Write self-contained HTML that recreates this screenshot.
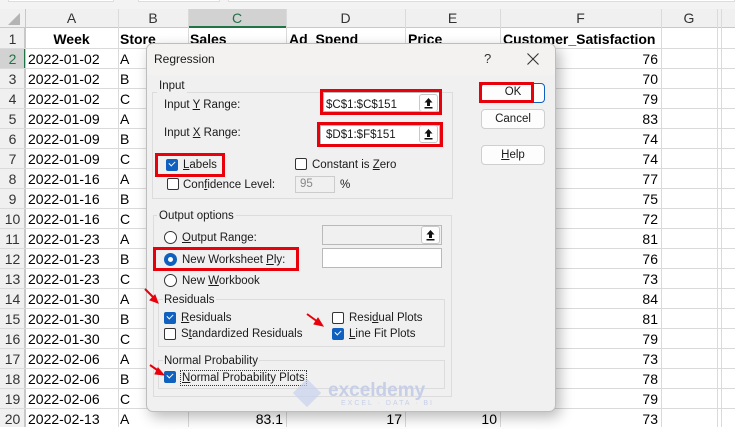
<!DOCTYPE html>
<html><head><meta charset="utf-8"><style>
*{margin:0;padding:0;box-sizing:border-box}
body{width:735px;height:427px;overflow:hidden;background:#fff;position:relative;font-family:"Liberation Sans",sans-serif}
.a{position:absolute}
.cell{position:absolute;font-size:14px;color:#000;line-height:20px;white-space:nowrap}
.hl{position:absolute;left:0;width:735px;height:1px;background:#dadada}
.vl{position:absolute;top:9px;width:1px;height:418px;background:#dadada}
.rh{position:absolute;left:0;width:25px;text-align:center;font-size:14px;color:#333;line-height:20px}
.ch{position:absolute;top:9px;height:19px;text-align:center;font-size:14px;color:#333;line-height:19px}
.d{font-size:11.5px;color:#1a1a1a;position:absolute;white-space:nowrap;line-height:14px}
.grp{position:absolute;border:1px solid #dcdcdc}
.cb{position:absolute;width:12px;height:12px;border:1px solid #333;border-radius:2px;background:#fff}
.cbk{position:absolute;width:12px;height:12px;border-radius:2px;background:#1060c0}
.cbk:after{content:"";position:absolute;left:3px;top:2px;width:5px;height:3px;border-left:1.3px solid #fff;border-bottom:1.3px solid #fff;transform:rotate(-45deg)}
.rd{position:absolute;width:13px;height:13px;border:1px solid #333;border-radius:50%;background:#fff}
.red{position:absolute;border:3px solid #e8000b}
.tb{position:absolute;background:#fff;border:1px solid #b9b9b9}
.btn{position:absolute;background:#fdfdfd;border:1px solid #cfcfcf;border-radius:4px;font-size:11.5px;text-align:center;color:#1a1a1a}
.up{position:absolute;width:19px;height:18px;background:#fdfdfd;border:1px solid #c8c8c8;border-radius:3px}
u{text-decoration:underline}
</style></head><body>
<div class="a" style="left:0;top:0;width:735px;height:9px;background:#f3f3f3"></div>
<div class="a" style="left:8px;top:0;width:106px;height:2px;border:1px solid #ddd;border-top:none;background:#fff"></div>
<div class="a" style="left:138px;top:0;width:82px;height:2px;border:1px solid #ddd;border-top:none;background:#fff"></div>
<div class="a" style="left:228px;top:0;width:507px;height:2px;border:1px solid #ddd;border-top:none;background:#fff"></div>
<div class="a" style="left:0;top:9px;width:735px;height:19px;background:#f0f0f0;border-bottom:1px solid #c8c8c8"></div>
<div class="a" style="left:0;top:28px;width:25px;height:399px;background:#f0f0f0;border-right:1px solid #c8c8c8"></div>
<div class="a" style="left:188px;top:9px;width:98px;height:19px;background:#d2d2d2;border-bottom:2px solid #217346"></div>
<div class="a" style="left:0;top:48px;width:25px;height:20px;background:#d2d2d2"></div>
<div class="a" style="left:24px;top:48px;width:2px;height:20px;background:#217346"></div>
<div class="a" style="left:8px;top:13px;width:0;height:0;border-left:12px solid transparent;border-bottom:12px solid #b4b4b4"></div>
<div class="ch" style="left:25px;width:93px">A</div>
<div class="ch" style="left:118px;width:70px">B</div>
<div class="ch" style="left:188px;width:98px;color:#217346">C</div>
<div class="ch" style="left:286px;width:119px">D</div>
<div class="ch" style="left:405px;width:95px">E</div>
<div class="ch" style="left:500px;width:161px">F</div>
<div class="ch" style="left:661px;width:56px">G</div>
<div class="vl" style="left:25px;background:#c8c8c8"></div>
<div class="vl" style="left:118px"></div><div class="vl" style="left:188px"></div><div class="vl" style="left:286px"></div><div class="vl" style="left:405px"></div><div class="vl" style="left:500px"></div><div class="vl" style="left:661px"></div><div class="vl" style="left:717px"></div><div class="vl" style="left:721px"></div>
<div class="hl" style="top:48px"></div><div class="hl" style="top:68px"></div><div class="hl" style="top:88px"></div><div class="hl" style="top:108px"></div><div class="hl" style="top:128px"></div><div class="hl" style="top:148px"></div><div class="hl" style="top:168px"></div><div class="hl" style="top:188px"></div><div class="hl" style="top:208px"></div><div class="hl" style="top:228px"></div><div class="hl" style="top:248px"></div><div class="hl" style="top:268px"></div><div class="hl" style="top:288px"></div><div class="hl" style="top:308px"></div><div class="hl" style="top:328px"></div><div class="hl" style="top:348px"></div><div class="hl" style="top:368px"></div><div class="hl" style="top:388px"></div><div class="hl" style="top:408px"></div>
<div class="rh" style="top:29px">1</div><div class="rh" style="top:49px;color:#217346">2</div><div class="rh" style="top:69px">3</div><div class="rh" style="top:89px">4</div><div class="rh" style="top:109px">5</div><div class="rh" style="top:129px">6</div><div class="rh" style="top:149px">7</div><div class="rh" style="top:169px">8</div><div class="rh" style="top:189px">9</div><div class="rh" style="top:209px">10</div><div class="rh" style="top:229px">11</div><div class="rh" style="top:249px">12</div><div class="rh" style="top:269px">13</div><div class="rh" style="top:289px">14</div><div class="rh" style="top:309px">15</div><div class="rh" style="top:329px">16</div><div class="rh" style="top:349px">17</div><div class="rh" style="top:369px">18</div><div class="rh" style="top:389px">19</div><div class="rh" style="top:409px">20</div>
<div class="cell" style="left:25px;top:29px;width:93px;text-align:center;font-weight:bold">Week</div>
<div class="cell" style="left:120px;top:29px;font-weight:bold">Store</div>
<div class="cell" style="left:190px;top:29px;font-weight:bold">Sales</div>
<div class="cell" style="left:289px;top:29px;font-weight:bold">Ad_Spend</div>
<div class="cell" style="left:408px;top:29px;font-weight:bold">Price</div>
<div class="cell" style="left:503px;top:29px;font-weight:bold">Customer_Satisfaction</div>
<div class="cell" style="left:28px;top:49px">2022-01-02<br>2022-01-02<br>2022-01-02<br>2022-01-09<br>2022-01-09<br>2022-01-09<br>2022-01-16<br>2022-01-16<br>2022-01-16<br>2022-01-23<br>2022-01-23<br>2022-01-23<br>2022-01-30<br>2022-01-30<br>2022-01-30<br>2022-02-06<br>2022-02-06<br>2022-02-06<br>2022-02-13</div>
<div class="cell" style="left:120px;top:49px">A<br>B<br>C<br>A<br>B<br>C<br>A<br>B<br>C<br>A<br>B<br>C<br>A<br>B<br>C<br>A<br>B<br>C<br>A</div>
<div class="cell" style="left:600px;top:49px;width:58px;text-align:right">76<br>70<br>79<br>83<br>74<br>74<br>77<br>75<br>72<br>81<br>76<br>73<br>84<br>81<br>79<br>73<br>78<br>79<br>73</div>
<div class="cell" style="left:200px;top:409px;width:83px;text-align:right">83.1</div>
<div class="cell" style="left:330px;top:409px;width:72px;text-align:right">17</div>
<div class="cell" style="left:430px;top:409px;width:67px;text-align:right">10</div>
<div class="a" style="left:146px;top:43px;width:410px;height:369px;background:#f0f0f0;border:1px solid #bdbdbd;border-radius:7px;box-shadow:4px 5px 14px rgba(0,0,0,0.28);overflow:hidden">
<div class="a" style="left:0;top:0;width:410px;height:31px;background:#f3f2f0"></div>
</div>
<div class="d" style="left:154px;top:52px;font-size:12px">Regression</div>
<div class="d" style="left:484px;top:52px;font-size:13px;color:#333">?</div>
<svg class="a" style="left:526px;top:52px" width="14" height="14"><path d="M1.5 1.5L12.5 12.5M12.5 1.5L1.5 12.5" stroke="#333" stroke-width="1.1"/></svg>
<div class="grp" style="left:152px;top:92px;width:301px;height:107px"></div>
<div class="d" style="left:157px;top:79px;background:#f0f0f0;padding:0 2px">Input</div>
<div class="d" style="left:164px;top:98px">Input <u>Y</u> Range:</div>
<div class="d" style="left:164px;top:126px">Input <u>X</u> Range:</div>
<div class="tb" style="left:323px;top:92px;width:117px;height:20px"></div>
<div class="d" style="left:326px;top:98px">$C$1:$C$151</div>
<div class="up" style="left:419px;top:94px"><svg width="17" height="16"><path d="M8.5 3L4.5 7.5H7V11H10V7.5H12.5Z" fill="#111"/><rect x="4.5" y="12" width="8" height="1.5" fill="#111"/></svg></div>
<div class="red" style="left:320px;top:89px;width:122px;height:26px"></div>
<div class="tb" style="left:320px;top:125px;width:120px;height:20px"></div>
<div class="d" style="left:326px;top:128px">$D$1:$F$151</div>
<div class="up" style="left:419px;top:125px"><svg width="17" height="16"><path d="M8.5 3L4.5 7.5H7V11H10V7.5H12.5Z" fill="#111"/><rect x="4.5" y="12" width="8" height="1.5" fill="#111"/></svg></div>
<div class="red" style="left:317px;top:122px;width:126px;height:25px"></div>
<div class="cbk" style="left:166px;top:159px"></div>
<div class="d" style="left:183px;top:158px"><u>L</u>abels</div>
<div class="red" style="left:155px;top:153px;width:70px;height:24px"></div>
<div class="cb" style="left:295px;top:158px"></div>
<div class="d" style="left:312px;top:158px">Constant is <u>Z</u>ero</div>
<div class="cb" style="left:167px;top:178px"></div>
<div class="d" style="left:183px;top:178px">Con<u>f</u>idence Level:</div>
<div class="a" style="left:295px;top:176px;width:40px;height:17px;border:1px solid #ccc;background:#f0f0f0;font-size:11.5px;color:#888;padding-left:4px;line-height:15px">95</div>
<div class="d" style="left:340px;top:178px">%</div>
<div class="btn" style="left:481px;top:83px;width:64px;height:20px;border:1.5px solid #1060c0;line-height:17px">OK</div>
<div class="red" style="left:479px;top:82px;width:55px;height:21px"></div>
<div class="btn" style="left:481px;top:109px;width:64px;height:20px;line-height:18px">Cancel</div>
<div class="btn" style="left:481px;top:145px;width:64px;height:20px;line-height:18px"><u>H</u>elp</div>
<div class="grp" style="left:153px;top:215px;width:299px;height:182px"></div>
<div class="d" style="left:157px;top:209px;background:#f0f0f0;padding:0 2px">Output options</div>
<div class="rd" style="left:164px;top:231px"></div>
<div class="d" style="left:182px;top:231px"><u>O</u>utput Range:</div>
<div class="a" style="left:322px;top:225px;width:120px;height:20px;border:1px solid #b9b9b9;background:#f0f0f0"></div>
<div class="up" style="left:421px;top:226px"><svg width="17" height="16"><path d="M8.5 3L4.5 7.5H7V11H10V7.5H12.5Z" fill="#111"/><rect x="4.5" y="12" width="8" height="1.5" fill="#111"/></svg></div>
<div class="rd" style="left:164px;top:253px;border:4px solid #1060c0"></div>
<div class="d" style="left:182px;top:253px">New Worksheet <u>P</u>ly:</div>
<div class="red" style="left:153px;top:247px;width:146px;height:24px"></div>
<div class="tb" style="left:322px;top:248px;width:120px;height:20px"></div>
<div class="rd" style="left:164px;top:274px"></div>
<div class="d" style="left:182px;top:274px">New <u>W</u>orkbook</div>
<div class="grp" style="left:158px;top:299px;width:287px;height:48px"></div>
<div class="d" style="left:163px;top:293px;background:#f0f0f0;padding:0 1px">Residuals</div>
<div class="cbk" style="left:164px;top:312px"></div>
<div class="d" style="left:181px;top:311px"><u>R</u>esiduals</div>
<div class="cb" style="left:164px;top:328px"></div>
<div class="d" style="left:181px;top:327px">S<u>t</u>andardized Residuals</div>
<div class="cb" style="left:332px;top:312px"></div>
<div class="d" style="left:349px;top:311px">Resi<u>d</u>ual Plots</div>
<div class="cbk" style="left:332px;top:328px"></div>
<div class="d" style="left:349px;top:327px"><u>L</u>ine Fit Plots</div>
<div class="grp" style="left:158px;top:360px;width:287px;height:29px"></div>
<div class="d" style="left:163px;top:354px;background:#f0f0f0;padding:0 1px">Normal Probability</div>
<div class="cbk" style="left:164px;top:371px"></div>
<div class="d" style="left:180px;top:370px;border:1px dotted #333;padding:0 1px"><u>N</u>ormal Probability Plots</div>
<div class="a" style="left:297px;top:383px;width:20px;height:20px;background:#c8d2ec;opacity:.7;transform:rotate(45deg)"></div>
<div class="a" style="left:328px;top:380px;font-size:19px;color:#c7cfe8;font-weight:bold">exceldemy</div>
<div class="a" style="left:341px;top:400px;font-size:7px;color:#c7cfe8;letter-spacing:2px">EXCEL · DATA · BI</div>
<svg class="a" style="left:0;top:0" width="735" height="427">
<g fill="#e8000b" stroke="#e8000b">
<line x1="145" y1="289" x2="155" y2="299" stroke-width="2"/><polygon points="158,303 150,300 155,295" />
<line x1="307" y1="314" x2="318" y2="322" stroke-width="2"/><polygon points="323,326 314,324 318,318"/>
<line x1="150" y1="365" x2="160" y2="372" stroke-width="2"/><polygon points="164,375 155,374 158,368"/>
</g></svg>
</body></html>
